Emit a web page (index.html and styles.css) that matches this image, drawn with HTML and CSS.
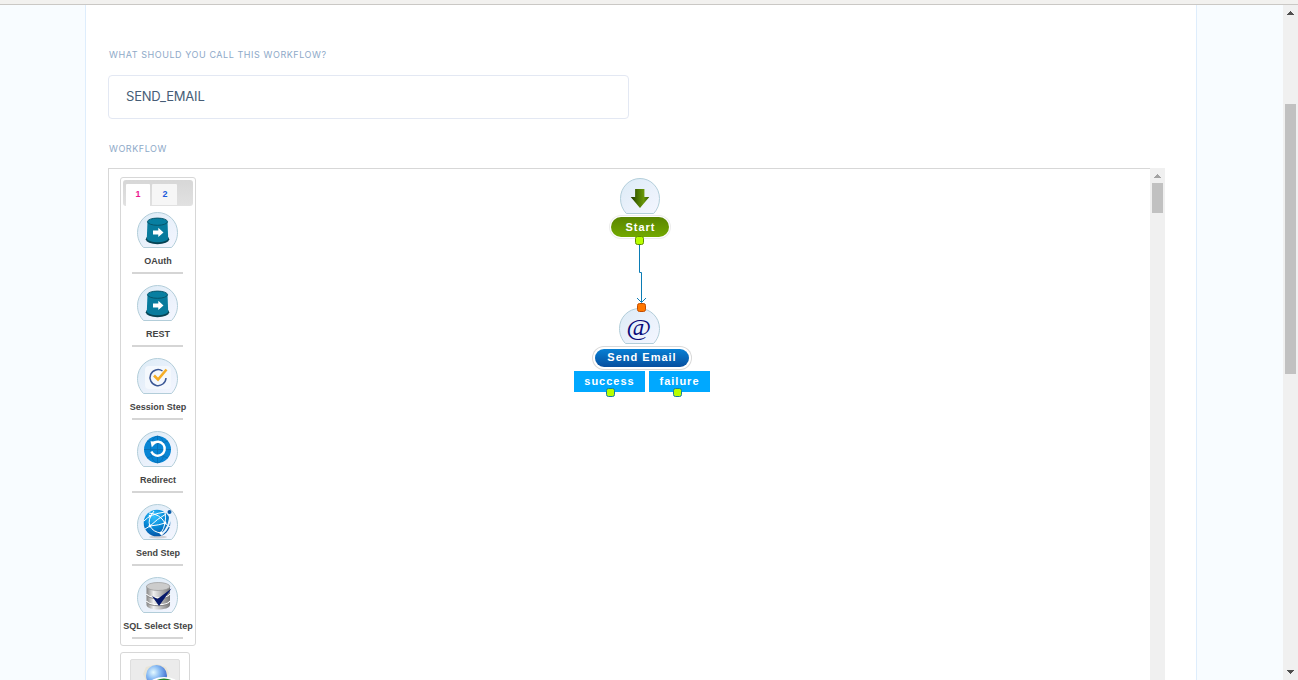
FILE: index.html
```html
<!DOCTYPE html>
<html lang="en">
<head>
<meta charset="utf-8">
<title>Workflow editor</title>
<link rel="stylesheet" href="styles.css">
</head>
<body>
<svg class="defs" width="0" height="0" aria-hidden="true">
  <defs>
    <linearGradient id="disc-fill" x1="0" y1="0" x2="1" y2="1"><stop offset="0" stop-color="#dcebf6"/><stop offset=".55" stop-color="#eaf1fb"/><stop offset="1" stop-color="#f4f6ff"/></linearGradient>
    <linearGradient id="arrow-fill" x1="0" y1="0" x2="1" y2="0"><stop offset="0" stop-color="#1f3300"/><stop offset=".35" stop-color="#477000"/><stop offset=".7" stop-color="#69970a"/><stop offset="1" stop-color="#375900"/></linearGradient>
    <linearGradient id="metal" x1="0" y1="0" x2="1" y2="0"><stop offset="0" stop-color="#858585"/><stop offset=".3" stop-color="#efefef"/><stop offset=".55" stop-color="#c5c5c5"/><stop offset="1" stop-color="#777"/></linearGradient>
    <radialGradient id="globe" cx=".4" cy=".25" r=".8"><stop offset="0" stop-color="#35c3ff"/><stop offset=".5" stop-color="#078bd8"/><stop offset="1" stop-color="#064fa0"/></radialGradient>
    <radialGradient id="ball" cx=".35" cy=".35" r=".75"><stop offset="0" stop-color="#e5faff"/><stop offset=".45" stop-color="#83b7f3"/><stop offset="1" stop-color="#345fc5"/></radialGradient>
    <symbol id="disc" viewBox="0 0 41 36">
      <path d="M6.500 35.500C2.700 31.500 .5 26.500 .5 20.500C.5 9.300 9.500 .5 20.500 .5S40.500 9.300 40.500 20.500C40.500 26.500 38.300 31.500 34.500 35.500Z" fill="url(#disc-fill)" stroke="#b2cdd9"/>
    </symbol>
    <symbol id="drum" viewBox="0 0 41 36">
      <ellipse cx="20.500" cy="27.300" rx="11.700" ry="4.900" fill="#064354"/>
      <path d="M10.500 9.500L9.800 26.500C11.500 31.500 29.500 31.500 31.200 26.500L30.500 9.500Z" fill="#077b9d"/>
      <ellipse cx="20.500" cy="9.700" rx="10" ry="3.600" fill="#087fa1" stroke="#07556b"/>
      <path d="M16 18.500H21.300V15.800L26.500 20.500L21.300 25V22.500H16Z" fill="#fff"/>
    </symbol>
  </defs>
</svg>
<div class="browser-edge"></div>
<div class="page">
  <main class="card">
    <label class="field-label">WHAT SHOULD YOU CALL THIS WORKFLOW?</label>
    <div class="field">SEND_EMAIL</div>
    <div class="field-label workflow-label">WORKFLOW</div>
    <section class="editor">
      <aside class="tools">
        <div class="palette">
          <div class="tabs"><span class="tab active">1</span><span class="tab">2</span></div>
          <div class="step"><svg class="icon"><use href="#disc"/><use href="#drum"/></svg><span>OAuth</span></div>
          <div class="step"><svg class="icon"><use href="#disc"/><use href="#drum"/></svg><span>REST</span></div>
          <div class="step"><svg class="icon" viewBox="0 0 41 36"><use href="#disc"/><rect x="8" y="8" width="26" height="23" rx="4" fill="#f4f8fd"/><path d="M25.500 13A8 8 0 1 0 29 20" fill="none" stroke="#3b5795" stroke-width="1.500"/><path d="M17 17.500L21 21.500L29.500 11.500" fill="none" stroke="#f4ad27" stroke-width="2.600"/></svg><span>Session Step</span></div>
          <div class="step"><svg class="icon" viewBox="0 0 41 36"><use href="#disc"/><circle cx="20.500" cy="18.500" r="13.500" fill="#0785d4"/><path d="M7 18.500H34M20.500 5V32M10 10Q20.500 15 31 10M10 27Q20.500 22 31 27" fill="none" stroke="#0870b5" stroke-width=".9"/><ellipse cx="20.500" cy="18.500" rx="7" ry="13.500" fill="none" stroke="#0870b5" stroke-width=".9"/><path d="M16 12.500A7 7 0 1 1 14.300 20.500" fill="none" stroke="#fff" stroke-width="2.400"/><path d="M13.500 10.200L20 10.800L14.800 16.200Z" fill="#fff"/></svg><span>Redirect</span></div>
          <div class="step"><svg class="icon" viewBox="0 0 41 36"><use href="#disc"/><ellipse cx="21" cy="33" rx="9" ry="1.500" fill="#d0cfd3"/><circle cx="20" cy="19" r="13.300" fill="url(#globe)"/><path d="M7 17Q13 10 28 8M12 9Q23 10 28 19M17 7Q10 16 13 22T24 29M28 8Q30 20 24 29M13 22Q20 15 29 10M13 22Q23 21 28 19L33 23M8 25L13 22" fill="none" stroke="#fff" stroke-width="1"/><path d="M24 31Q34 23 33 9" fill="none" stroke="#e7f5ff" stroke-width="2"/><circle cx="32.500" cy="8" r="2" fill="#075cab"/><g fill="#fff"><circle cx="13" cy="12" r="1.300"/><circle cx="28" cy="19" r="1.400"/><circle cx="13" cy="22" r="1.400"/><circle cx="24" cy="29" r="1.500"/></g></svg><span>Send Step</span></div>
          <div class="step"><svg class="icon" viewBox="0 0 41 36"><use href="#disc"/><path d="M9.500 9V28C10 34 32.500 34 33 28V9Z" fill="url(#metal)"/><ellipse cx="21.200" cy="9.500" rx="11.700" ry="4" fill="#ccc" stroke="#999" stroke-width=".7"/><path d="M9.500 17C12 22 31 22 33 17M9.500 24C12 29 31 29 33 24" fill="none" stroke="#fff" stroke-width="1.200"/><path d="M9.500 18C12 23 31 23 33 18M9.500 25C12 30 31 30 33 25" fill="none" stroke="#777" stroke-width=".8"/><path d="M15 19L20.500 22L34.500 11.500L22 29Z" fill="#06196b"/></svg><span>SQL Select Step</span></div>
        </div>
        <div class="toolbox"><div class="tool-button"><svg width="48" height="34" viewBox="0 0 48 34"><path d="M15 7L12 14L15 20L25 22L35 20L38 13L35 7L26 4Z" fill="#e8e4d7"/><circle cx="25.500" cy="15.500" r="10.500" fill="url(#ball)"/><ellipse cx="33" cy="24.500" rx="15" ry="7.500" fill="#fff"/><ellipse cx="33" cy="26" rx="12" ry="7.500" fill="#22842b"/></svg></div></div>
      </aside>
      <div class="canvas">
        <svg class="wires" width="1041" height="512" viewBox="109 169 1041 512"><path d="M639.500 244V272.500H641.500V302M637 298L641.500 302.500L646 298" fill="none" stroke="#0b7cb5"/></svg>
        <svg class="icon start-icon" viewBox="0 0 41 36" preserveAspectRatio="none"><use href="#disc"/><path d="M15.500 11H25V19H30L20.500 30L11 19H15.500Z" fill="url(#arrow-fill)"/></svg>
        <div class="pill start-pill">Start</div>
        <svg class="icon mail-icon"><use href="#disc"/></svg>
        <div class="at-sign">@</div>
        <div class="pill mail-pill">Send Email</div>
        <div class="outcome success">success</div>
        <div class="outcome failure">failure</div>
        <i class="port start-port"></i><i class="port input-port"></i><i class="port success-port"></i><i class="port failure-port"></i>
      </div>
      <div class="scrollbar inner-scroll"><svg class="arrow" viewBox="0 0 7 4" shape-rendering="crispEdges"><path d="M3 0h1v1h1v1h1v1h1v1H0V3h1V2h1V1h1Z"/></svg><div class="thumb"></div></div>
    </section>
  </main>
  <div class="scrollbar page-scroll"><svg class="arrow" viewBox="0 0 7 4" shape-rendering="crispEdges"><path d="M3 0h1v1h1v1h1v1h1v1H0V3h1V2h1V1h1Z"/></svg><div class="thumb"></div><svg class="arrow down" viewBox="0 0 7 4" shape-rendering="crispEdges"><path d="M0 0h7v1H6v1H5v1H4v1H3V3H2V2H1V1H0Z"/></svg></div>
</div>
</body>
</html>
```
FILE: styles.css
```css
* { box-sizing: border-box; }
body { margin: 0; width: 1298px; height: 680px; overflow: hidden; font-family: "Liberation Sans", sans-serif; }
.defs { position: absolute; }
.browser-edge { height: 5px; background: #f2f1ef; border-bottom: 1px solid #cac8c5; }
.page { display: flex; height: 675px; padding-left: 85px; background: #f8fcff; }
.card { width: 1112px; padding: 43px 31px 0 22px; background: #fff; border: solid #deedfc; border-width: 0 1px; }
.field-label { display: block; height: 14px; padding-left: 1px; color: #8ea9c8; font: 9px/14px Inter, sans-serif; letter-spacing: .56px; }
.field { width: 521px; height: 44px; margin-top: 13px; padding-left: 17px; border: 1px solid #e3e8f3; border-radius: 4px; color: #475d76; font: 13px/41px Inter, sans-serif; letter-spacing: -.2px; }
.workflow-label { margin-top: 23px; }
.editor { display: flex; position: relative; width: 1057px; height: 512px; margin-top: 12px; border-left: 1px solid #d7d7d7; }
.tools { width: 87px; height: 512px; padding: 9px 0 0 11px; border-top: 1px solid #d7d7d7; overflow: hidden; }
.palette { width: 76px; height: 469px; margin-top: -1px; padding: 2px; border: 1px solid #d7d7d7; border-radius: 3px; }
.tabs { display: flex; gap: 2px; height: 26px; padding: 4px 3px 0; border-radius: 3px; background: linear-gradient(#d7d7d7, #e1e1e1); }
.tab { width: 25px; height: 21px; padding-left: 1px; border-radius: 1px 1px 0 0; background: #f6f6f6; color: #1c5bdb; font: bold 9px/21px "Liberation Sans", sans-serif; text-align: center; }
.tab.active { width: 24px; height: 22px; padding-left: 0; background: #fff; color: #ec1590; }
.step { display: flex; flex-direction: column; align-items: center; width: 69px; height: 73px; padding-top: 6px; color: #444; font: bold 9px/14px "Liberation Sans", sans-serif; white-space: nowrap; }
.step span { margin-top: 6px; padding-left: 1px; }
.step::after { content: ""; width: 51px; height: 2px; margin-top: 4px; background: #d5d5d5; flex: none; }
.icon { display: block; width: 41px; height: 36px; flex: none; }
.toolbox { width: 70px; height: 70px; margin-top: 6px; padding: 6px 9px; border: 1px solid #d7d7d7; border-radius: 3px; }
.tool-button { width: 50px; height: 50px; border: 1px solid #dedede; border-radius: 2px; background: #ebebeb; }
.tool-button svg { display: block; }
.canvas { flex: 1; border-top: 1px solid #d7d7d7; }
.wires { position: absolute; left: 0; top: 1px; }
.start-icon { position: absolute; left: 511px; top: 10px; width: 40px; }
.mail-icon { position: absolute; left: 510px; top: 140px; }
.at-sign { position: absolute; left: 509px; top: 144px; width: 41px; color: #090978; font: italic 24px/30px "Liberation Serif", serif; text-align: center; transform: scaleX(1.12); }
.pill { position: absolute; border-radius: 13px; color: #fff; font: bold 11px/20px "Liberation Sans", sans-serif; letter-spacing: 1px; text-align: center; }
.start-pill { left: 502px; top: 49px; width: 58px; height: 20px; padding-left: 1px; line-height: 21px; background: linear-gradient(#598500, #73a900); box-shadow: 0 0 0 1px #fff, 0 0 0 2px #ededed; }
.mail-pill { left: 486px; top: 181px; width: 94px; height: 18px; line-height: 17px; background: linear-gradient(#0880d4, #064f9f); box-shadow: 0 0 0 2px #fff, 0 0 0 3px #d9d9d9; }
.outcome { position: absolute; top: 203px; height: 21px; background: #00a8ff; color: #fff; font: bold 11px/20px "Liberation Sans", sans-serif; letter-spacing: 1px; text-align: center; }
.success { left: 465px; width: 71px; }
.failure { left: 540px; width: 61px; }
.port { position: absolute; width: 9px; height: 9px; border: 1px solid #608d00; border-radius: 2.5px; background: #b8ff00; }
.start-port { left: 526px; top: 68px; }
.input-port { left: 528px; top: 135px; border-color: #c34d00; background: #ff7800; }
.success-port { left: 497px; top: 220px; border-color: #167ba0; }
.failure-port { left: 564px; top: 220px; border-color: #167ba0; }
.scrollbar { display: flex; flex: none; flex-direction: column; align-items: center; width: 15px; background: #f0f0f0; }
.arrow { display: block; width: 7px; height: 4px; flex: none; fill: #505050; }
.thumb { width: 11px; background: #c1c1c1; flex: none; }
.inner-scroll { padding-top: 6px; }
.inner-scroll .arrow { fill: #a3a3a3; }
.inner-scroll .thumb { height: 30px; margin-top: 5px; }
.page-scroll { height: 675px; margin-left: auto; padding: 6px 0; }
.page-scroll .thumb { height: 270px; margin-top: 89px; }
.page-scroll .down { margin-top: auto; }
```
